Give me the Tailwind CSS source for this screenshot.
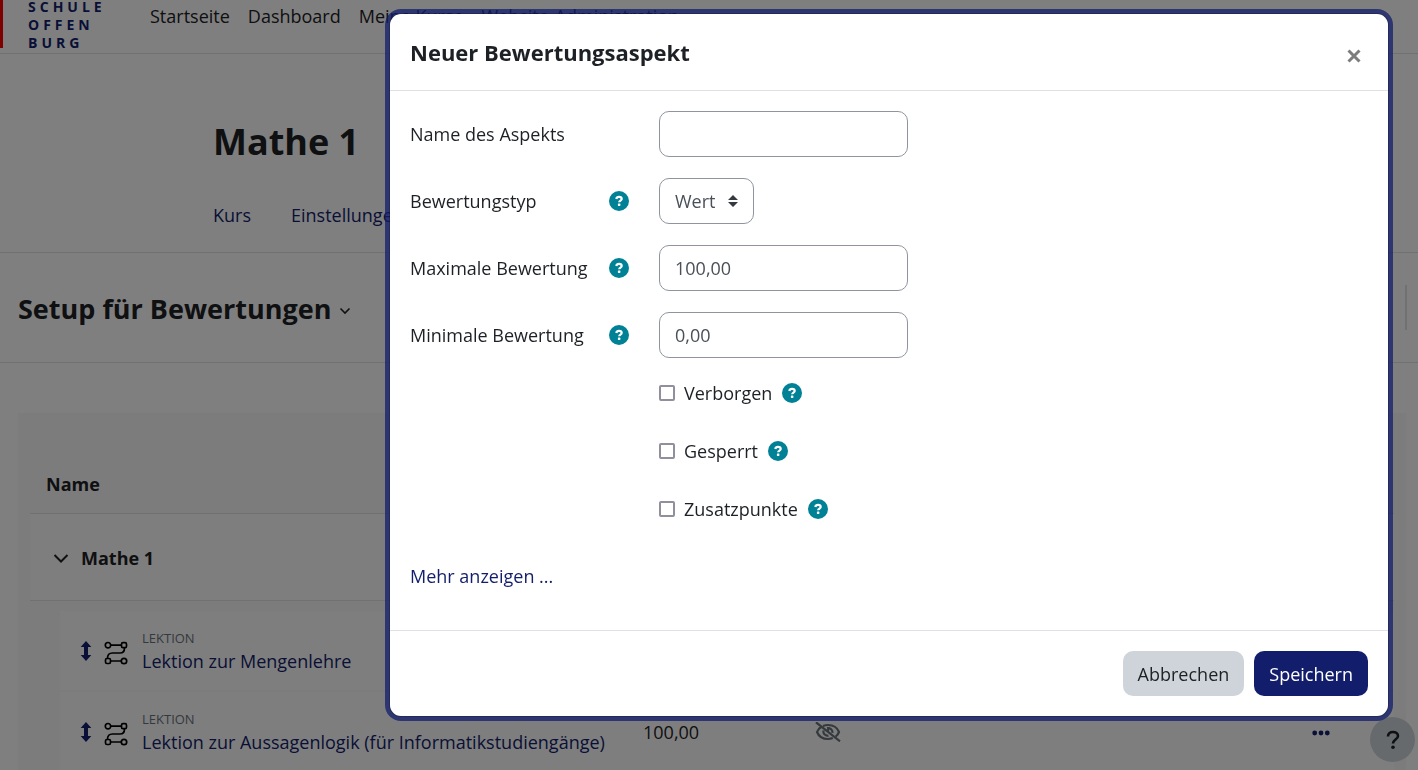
<!DOCTYPE html>
<html lang="de">
<head>
<meta charset="utf-8">
<meta name="viewport" content="width=device-width, initial-scale=1">
<title>Setup für Bewertungen</title>
<script src="https://cdn.jsdelivr.net/npm/@tailwindcss/browser@4"></script>
</head>
<body class="relative h-screen overflow-hidden bg-white font-['Open_Sans','Noto_Sans',sans-serif] text-[18px] leading-7 text-[#1d2125]">
<svg class="hidden" aria-hidden="true">
  <symbol id="help" viewBox="0 0 20 20">
    <circle cx="10" cy="10" r="10" fill="#008196"/>
    <path d="M7.300 7.900C7.600 6.500 8.700 5.900 10 5.900c1.500 0 2.700.8 2.700 2.100 0 1.600-2.500 1.600-2.500 3.200" fill="none" stroke="#fff" stroke-width="2.200"/>
    <rect x="8.900" y="12.500" width="2.500" height="2.400" rx=".6" fill="#fff"/>
  </symbol>
  <symbol id="move" viewBox="0 0 12 20">
    <path d="M6 0l5.300 6H8v8h3.300L6 20 .7 14H4V6H.7z" fill="#121e6c"/>
  </symbol>
  <symbol id="lesson" viewBox="0 0 24 24">
    <g fill="none" stroke="#000" stroke-width="1.700">
      <circle cx="4" cy="4.200" r="2.700"/><rect x="17.500" y="1.700" width="5" height="5" rx="1.500"/>
      <rect x="1.500" y="17.500" width="5" height="5" rx="1.500"/><circle cx="20" cy="20" r="2.700"/>
      <path d="M6.700 4.200h10.800M6.500 20h10.800M20.500 7c0 3.500-1.500 5-4.500 5H8.500C5 12 3.500 13.500 3.500 17.300"/>
    </g>
  </symbol>
</svg>

<div class="h-full overflow-hidden">
  <nav class="flex h-[54px] items-start border-b border-[#dee2e6]">
    <div class="-mt-[2px] h-[50px] w-[150px] border-l-[3px] border-[#ff0000] pl-[25px] text-[14px] leading-[18px] font-bold tracking-[4px] text-[#121e6c]">SCHULE<br>OFFEN<br>BURG</div>
    <div class="flex gap-[18px] pt-[2px]">
      <a href="#">Startseite</a><a href="#">Dashboard</a><a href="#">Meine Kurse</a><a href="#">Website-Administration</a>
    </div>
  </nav>

  <header class="h-[199px] border-b border-[#dee2e6] pt-[63px] pl-[213px]">
    <h1 class="text-[36px] leading-[50px] font-bold">Mathe 1</h1>
    <div class="mt-[34px] flex gap-10 text-[#121e6c]"><a href="#">Kurs</a><a href="#">Einstellungen</a></div>
  </header>

  <div class="flex h-[110px] items-center justify-between border-b border-[#dee2e6] pr-[11px] pl-[18px]">
    <button type="button" class="flex items-center gap-2 pt-[2px] text-[27px] font-bold">
      Setup für Bewertungen
      <svg class="mt-1 h-3 w-3" viewBox="0 0 12 12"><path d="M1.500 3.500L6 8l4.500-4.500" fill="none" stroke="#1d2125" stroke-width="1.600"/></svg>
    </button>
    <div class="h-[45px] w-[2px] bg-[#dee2e6]"></div>
  </div>

  <main class="mt-[50px] mr-3 ml-[18px] bg-[#f8f8f8] px-3 pt-[42px]">
    <table class="w-full table-fixed border-collapse">
      <colgroup><col class="w-[30px]"><col class="w-[570px]"><col class="w-[170px]"><col><col class="w-[98px]"></colgroup>
      <thead>
        <tr class="h-[58px] border-b border-[#dee2e6]"><th colspan="5" class="pl-4 text-left font-bold">Name</th></tr>
      </thead>
      <tbody>
        <tr class="h-[87px] border-b border-[#dee2e6] bg-[#fdfdfd]">
          <th colspan="5" class="text-left font-bold">
            <div class="flex items-center gap-3 pt-[2px] pl-[23px]">
              <svg class="h-4 w-4" viewBox="0 0 16 16"><path d="M1.500 5L8 11.500 14.500 5" fill="none" stroke="#1d2125" stroke-width="2"/></svg>
              Mathe 1
            </div>
          </th>
        </tr>
        <tr class="h-[11px]"><td colspan="5"></td></tr>
        <tr class="h-[80px]">
          <td></td>
          <td class="border-b-2 border-[#f8f8f8] bg-[#fdfdfd]">
            <div class="flex items-center pt-[2px] pl-5">
              <svg class="mb-[2px] h-5 w-3"><use href="#move"/></svg>
              <svg class="mt-[2px] ml-3 h-6 w-6"><use href="#lesson"/></svg>
              <div class="ml-[14px]"><div class="text-[13px] leading-[18px] text-[#6a737b]">LEKTION</div><a href="#" class="text-[#121e6c]">Lektion zur Mengenlehre</a></div>
            </div>
          </td>
          <td class="border-b-2 border-[#f8f8f8] bg-[#fdfdfd]"></td><td class="border-b-2 border-[#f8f8f8] bg-[#fdfdfd]"></td><td class="border-b-2 border-[#f8f8f8] bg-[#fdfdfd]"></td>
        </tr>
        <tr class="h-[80px] bg-[#fdfdfd]">
          <td class="bg-[#f8f8f8]"></td>
          <td>
            <div class="flex items-center pt-[2px] pl-5">
              <svg class="mb-[2px] h-5 w-3"><use href="#move"/></svg>
              <svg class="mt-[2px] ml-3 h-6 w-6"><use href="#lesson"/></svg>
              <div class="ml-[14px]"><div class="text-[13px] leading-[18px] text-[#6a737b]">LEKTION</div><a href="#" class="text-[#121e6c]">Lektion zur Aussagenlogik (für Informatikstudiengänge)</a></div>
            </div>
          </td>
          <td class="pl-[13px]">100,00</td>
          <td class="pl-[15px]">
            <svg class="h-5 w-[26px]" viewBox="0 0 26 20" fill="none" stroke="#6a737b" stroke-width="2.200"><path d="M6 5C3.800 6.500 2.600 8.300 2 10c1.600 4 5.800 7 11 7 1.800 0 3.400-.3 4.800-.9M8 3.900C9.500 3.300 11.200 3 13 3c5.200 0 9.400 3 11 7-.6 1.600-1.700 3.200-3.200 4.500M8.600 8.500c-.9 3 1.500 5.500 4.900 5.300M12 6.200c3.500-.5 5.800 1.700 5.400 4.600M13.300 6.500c.2 1.600-.3 2.400-1.300 3M1 .3l24 19"/></svg>
          </td>
          <td class="pl-4"><button type="button" aria-label="Aktionen" class="mt-[3px] block"><svg class="h-[6px] w-[18px]" viewBox="0 0 18 6" fill="#121e6c"><circle cx="2.700" cy="3" r="2.400"/><circle cx="9" cy="3" r="2.400"/><circle cx="15.300" cy="3" r="2.400"/></svg></button></td>
        </tr>
      </tbody>
    </table>
  </main>
</div>

<button type="button" aria-label="Hilfe" class="absolute right-[3px] bottom-2 flex h-[45px] w-[45px] items-center justify-center rounded-full bg-[#ced4da]">
  <svg class="h-5 w-4" viewBox="0 0 16 20"><path d="M3 6.500C3 3.500 5 2 8 2c2.800 0 5 1.500 5 4 0 3.500-5 3.600-5 7.500" fill="none" stroke="#1d2125" stroke-width="2.600"/><circle cx="8" cy="17.300" r="1.800" fill="#1d2125"/></svg>
</button>

<div class="fixed inset-0 flex items-start bg-black/50 pt-[13px] pr-[29px] pl-4">
  <section role="dialog" aria-labelledby="dlg" class="ml-auto w-full max-w-[1000px] rounded-xl border border-black/20 bg-white bg-clip-padding ring-4 ring-[#121e6c]/75">
    <div class="flex h-[77px] items-center justify-between border-b border-[#dee2e6] px-5">
      <h2 id="dlg" class="text-[22px] font-bold">Neuer Bewertungsaspekt</h2>
      <button type="button" aria-label="Schließen" class="mt-2 p-[7px]"><svg class="h-[14px] w-[14px]" viewBox="0 0 14 14"><path d="M1.500 1.500l11 11M12.500 1.500l-11 11" stroke="#7d7d7d" stroke-width="3"/></svg></button>
    </div>
    <form class="px-5 pt-5 pb-10">
      <div class="grid grid-cols-[249px_1fr] items-center gap-y-[21px]">
        <label for="name">Name des Aspekts</label>
        <input id="name" type="text" class="h-[46px] w-[249px] rounded-[10px] border border-[#8f959e] px-[15px] text-[#495057]">

        <div class="flex items-center justify-between pr-[30px]"><label for="typ">Bewertungstyp</label><button type="button" aria-label="Hilfe zu Bewertungstyp"><svg class="h-5 w-5"><use href="#help"/></svg></button></div>
        <div class="relative w-[95px]">
          <select id="typ" class="h-[46px] w-full appearance-none rounded-[10px] border border-[#8f959e] bg-white px-[15px] text-[#495057]"><option>Wert</option></select>
          <svg class="pointer-events-none absolute top-4 right-4 h-[14px] w-[10px]" viewBox="0 0 10 14"><path d="M5 1l5 5H0zM5 13l5-5H0z" fill="#343a40"/></svg>
        </div>

        <div class="flex items-center justify-between pr-[30px]"><label for="max">Maximale Bewertung</label><button type="button" aria-label="Hilfe zu Maximale Bewertung"><svg class="h-5 w-5"><use href="#help"/></svg></button></div>
        <input id="max" type="text" value="100,00" class="h-[46px] w-[249px] rounded-[10px] border border-[#8f959e] px-[15px] text-[#495057]">

        <div class="flex items-center justify-between pr-[30px]"><label for="min">Minimale Bewertung</label><button type="button" aria-label="Hilfe zu Minimale Bewertung"><svg class="h-5 w-5"><use href="#help"/></svg></button></div>
        <input id="min" type="text" value="0,00" class="h-[46px] w-[249px] rounded-[10px] border border-[#8f959e] px-[15px] text-[#495057]">
      </div>
      <div class="mt-[21px] ml-[249px] flex flex-col gap-[30px]">
        <div class="flex items-center"><input id="hid" type="checkbox" class="h-4 w-4 appearance-none rounded-[2px] border-2 border-[#8f8f9d] checked:bg-[#121e6c]"><label for="hid" class="ml-[9px]">Verborgen</label><button type="button" aria-label="Hilfe zu Verborgen" class="ml-[10px]"><svg class="h-5 w-5"><use href="#help"/></svg></button></div>
        <div class="flex items-center"><input id="lock" type="checkbox" class="h-4 w-4 appearance-none rounded-[2px] border-2 border-[#8f8f9d] checked:bg-[#121e6c]"><label for="lock" class="ml-[9px]">Gesperrt</label><button type="button" aria-label="Hilfe zu Gesperrt" class="ml-[10px]"><svg class="h-5 w-5"><use href="#help"/></svg></button></div>
        <div class="flex items-center"><input id="extra" type="checkbox" class="h-4 w-4 appearance-none rounded-[2px] border-2 border-[#8f8f9d] checked:bg-[#121e6c]"><label for="extra" class="ml-[9px]">Zusatzpunkte</label><button type="button" aria-label="Hilfe zu Zusatzpunkte" class="ml-[10px]"><svg class="h-5 w-5"><use href="#help"/></svg></button></div>
      </div>
      <a href="#" class="mt-[39px] inline-block text-[#121e6c]">Mehr anzeigen ...</a>
    </form>
    <div class="flex justify-end gap-[10px] border-t border-[#dee2e6] p-5">
      <button type="button" class="h-[45px] rounded-[10px] bg-[#ced4da] px-[15px]">Abbrechen</button>
      <button type="button" class="h-[45px] rounded-[10px] bg-[#121e6c] px-[15px] text-white">Speichern</button>
    </div>
  </section>
</div>
</body>
</html>
